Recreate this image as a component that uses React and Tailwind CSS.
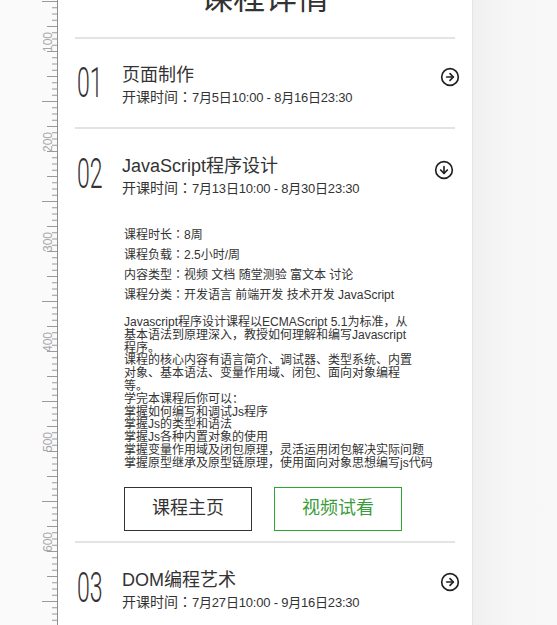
import React from "react";
import { CircleArrowRight, CircleArrowDown } from "lucide-react";

const FONT = { fontFamily: '"Liberation Sans", "Noto Sans CJK SC", sans-serif' };
const JP = { fontFamily: '"Noto Sans CJK JP", sans-serif' };

function Colon({ className = "" }) {
  return (
    <span style={JP} className={"leading-[0] " + className}>
      ：
    </span>
  );
}

function Ruler() {
  const ticks = [];
  for (let k = 0; k <= 100; k++) {
    const y = 1.5 + 6.25 * k;
    const x1 = k % 16 === 0 ? 42 : k % 4 === 0 ? 47 : 52;
    ticks.push(<line key={k} x1={x1} x2={57} y1={y} y2={y} stroke="#9a9a9a" strokeWidth="1" />);
  }
  const labels = [100, 200, 300, 400, 500, 600].map((v, i) => {
    const cy = 42 + 100 * i;
    return (
      <text
        key={v}
        x={0}
        y={0}
        transform={`translate(51.5 ${cy}) rotate(-90)`}
        textAnchor="middle"
        fontSize="12"
        fill="#a8a8a8"
        fontFamily="Liberation Sans, sans-serif"
      >
        {v}
      </text>
    );
  });
  return (
    <div className="w-[58px] h-full bg-[#fafafa] shrink-0">
      <svg width="58" height="625" viewBox="0 0 58 625">
        <line x1="57.5" x2="57.5" y1="0" y2="625" stroke="#8f8f8f" strokeWidth="1" />
        {ticks}
        {labels}
      </svg>
    </div>
  );
}

function Num({ n }) {
  return (
    <div className="w-[47px] h-[44px] shrink-0 pl-[2px]">
      <span
        className="inline-block origin-left scale-x-[0.55] text-[42px] leading-none font-light text-[#333] -mt-[1px]"
        style={{ fontFamily: "Roboto, sans-serif" }}
      >
        {n}
      </span>
    </div>
  );
}

function Header({ n, title, time, down }) {
  return (
    <div className="flex items-start">
      <Num n={n} />
      <div className="flex-1">
        <div className="h-[24px] text-[18px] leading-[24px] text-[#333]">{title}</div>
        <div className="h-[20px] text-[14px] leading-[20px] text-[#333] whitespace-nowrap">
          开课时间
          <Colon />
          <span className="text-[13px] tracking-[-0.2px]">{time}</span>
        </div>
      </div>
      {down ? (
        <CircleArrowDown size={20} strokeWidth={2} className="text-[#222] mt-[6px] mr-[1.5px]" />
      ) : (
        <CircleArrowRight size={20} strokeWidth={2} className="text-[#222] mt-[4px] -mr-[4.5px]" />
      )}
    </div>
  );
}

const details = [
  ["课程时长", "8周"],
  ["课程负载", "2.5小时/周"],
  ["内容类型", "视频 文档 随堂测验 富文本 讨论"],
  ["课程分类", "开发语言 前端开发 技术开发 JavaScript"],
];

const para = [
  "Javascript程序设计课程以ECMAScript 5.1为标准，从",
  "基本语法到原理深入，教授如何理解和编写Javascript",
  "程序。",
  "课程的核心内容有语言简介、调试器、类型系统、内置",
  "对象、基本语法、变量作用域、闭包、面向对象编程",
  "等。",
  "学完本课程后你可以：",
  "掌握如何编写和调试Js程序",
  "掌握Js的类型和语法",
  "掌握Js各种内置对象的使用",
  "掌握变量作用域及闭包原理，灵活运用闭包解决实际问题",
  "掌握原型继承及原型链原理，使用面向对象思想编写js代码",
];

export default function App() {
  return (
    <div className="flex h-[625px] w-[557px] overflow-hidden bg-white" style={FONT}>
      <Ruler />
      <div className="w-[414px] shrink-0 bg-white px-[17px]">
        <div className="-mt-[22px] mb-[19px] h-[40px] text-center text-[32px] leading-[40px] text-[#333]">
          课程详情
        </div>
        <div className="h-[2px] bg-[#e3e3e3]" />
        <div className="pt-[24px] pb-[20px]">
          <Header n="01" title="页面制作" time="7月5日10:00 - 8月16日23:30" />
        </div>
        <div className="h-[2px] bg-[#e3e3e3]" />
        <div className="pt-[25px] pb-[10px]">
          <Header n="02" title="JavaScript程序设计" time="7月13日10:00 - 8月30日23:30" down />
          <div className="pl-[49px]">
            <div className="mt-[27px] text-[12px] leading-[20px] text-[#333]">
              {details.map(([k, v]) => (
                <div key={k} className="h-[20px] whitespace-nowrap">
                  {k}
                  <Colon />
                  {v}
                </div>
              ))}
            </div>
            <div className="mt-[11px] text-[12px] leading-[12.8px] text-[#333]">
              {para.map((l, i) => (
                <div key={i} className="whitespace-nowrap">
                  {l}
                </div>
              ))}
            </div>
            <div className="mt-[17px] flex gap-[22px]">
              <div className="flex h-[44px] w-[128px] items-center justify-center border border-[#333] text-[18px] text-[#333]">
                课程主页
              </div>
              <div className="flex h-[44px] w-[128px] items-center justify-center border border-[#2ea52e] text-[18px] text-[#3a9c3a]">
                视频试看
              </div>
            </div>
          </div>
        </div>
        <div className="h-[2px] bg-[#e3e3e3]" />
        <div className="pt-[25px]">
          <Header n="03" title="DOM编程艺术" time="7月27日10:00 - 9月16日23:30" />
        </div>
      </div>
      <div className="flex-1 border-l border-[#e4e4e4] bg-gradient-to-r from-[#f0f0f0] via-[#f7f7f7] to-[#f8f8f8]" />
    </div>
  );
}
